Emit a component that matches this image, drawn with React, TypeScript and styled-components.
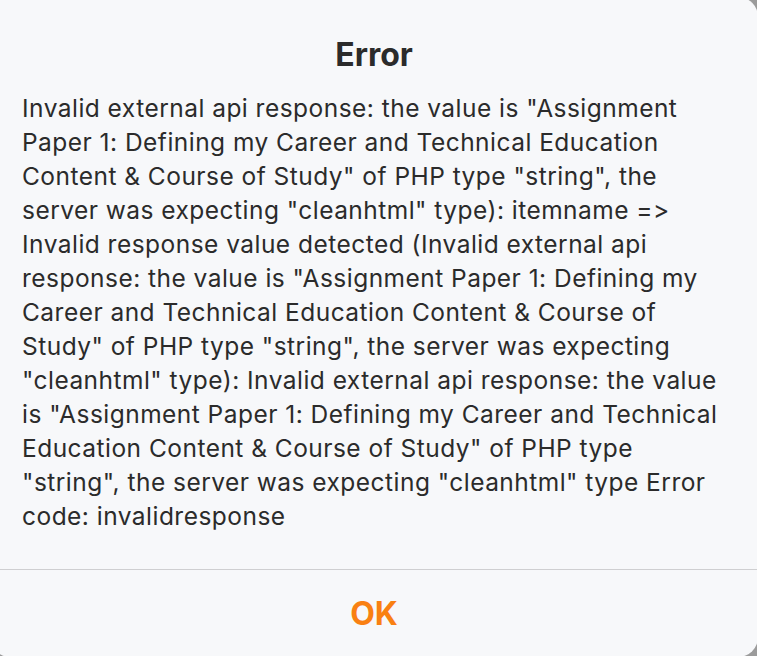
import React from "react";
import styled, { createGlobalStyle } from "styled-components";

const Global = createGlobalStyle`
  html, body { margin: 0; padding: 0; }
  body {
    background: #9b9b9b;
    width: 757px;
    height: 656px;
    overflow: hidden;
    font-family: Inter, "Noto Sans", "Liberation Sans", sans-serif;
    font-variant-ligatures: none;
    font-feature-settings: "calt" 0, "liga" 0;
  }
`;

const Backdrop = styled.div`
  width: 757px;
  height: 656px;
  overflow: hidden;
`;

const Dialog = styled.div`
  margin: -3px 0 0 -10px;
  width: 768px;
  height: 660px;
  box-sizing: border-box;
  background: #f7f8fa;
  border-radius: 20px;
  display: flex;
  flex-direction: column;
`;

const Title = styled.h1`
  margin: 0;
  padding: 41px 32px 0;
  font-size: 32px;
  line-height: 34px;
  font-weight: 700;
  color: #2b2b2b;
  text-align: center;
`;

const Message = styled.p`
  margin: 19px 0 0;
  padding: 0 36px 0 32px;
  font-size: 24.5px;
  line-height: 34px;
  letter-spacing: 0.47px;
  font-weight: 400;
  color: #2b2b2b;
  flex: 1;
`;

const Divider = styled.hr`
  margin: 0;
  border: 0;
  border-top: 1px solid #cfcfd1;
`;

const Footer = styled.div`
  height: 87px;
  display: flex;
  align-items: center;
  justify-content: center;
`;

const OkButton = styled.button`
  border: 0;
  background: transparent;
  padding: 0;
  font-family: inherit;
  font-size: 32px;
  line-height: 40px;
  font-weight: 700;
  color: #f98012;
  cursor: pointer;
`;

const text =
  'Invalid external api response: the value is "Assignment Paper 1: Defining my Career and Technical Education Content & Course of Study" of PHP type "string", the server was expecting "cleanhtml" type): itemname => Invalid response value detected (Invalid external api response: the value is "Assignment Paper 1: Defining my Career and Technical Education Content & Course of Study" of PHP type "string", the server was expecting "cleanhtml" type): Invalid external api response: the value is "Assignment Paper 1: Defining my Career and Technical Education Content & Course of Study" of PHP type "string", the server was expecting "cleanhtml" type Error code: invalidresponse';

export default function App() {
  return (
    <>
      <Global />
      <Backdrop>
        <Dialog>
          <Title>Error</Title>
          <Message>{text}</Message>
          <Divider />
          <Footer>
            <OkButton>OK</OkButton>
          </Footer>
        </Dialog>
      </Backdrop>
    </>
  );
}
